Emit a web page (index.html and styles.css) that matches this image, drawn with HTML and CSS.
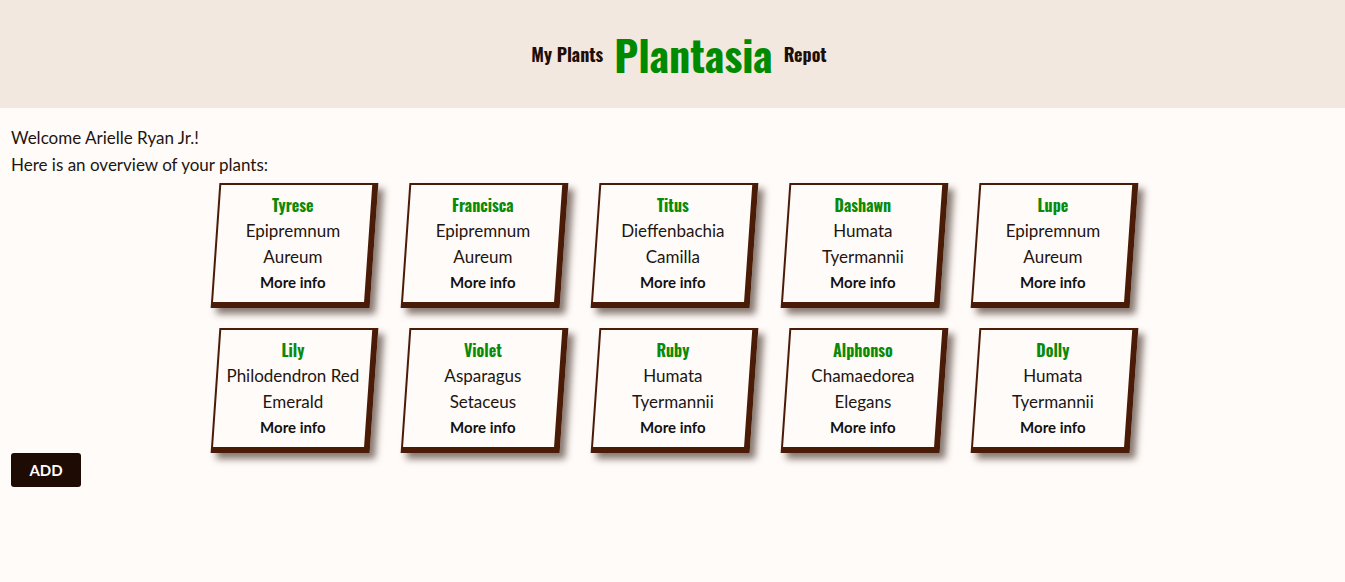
FILE: index.html
```html
<!DOCTYPE html>
<html lang="en">
<head>
<meta charset="utf-8">
<title>Plantasia</title>
<link rel="stylesheet" href="styles.css">
</head>
<body>
<header class="site-header">
  <nav class="nav">
    <a class="nav-link" href="#">My Plants</a>
    <a class="brand" href="#">Plantasia</a>
    <a class="nav-link" href="#">Repot</a>
  </nav>
</header>
<main class="content">
  <p class="intro">Welcome Arielle Ryan Jr.!</p>
  <p class="intro">Here is an overview of your plants:</p>
  <div class="plant-grid">
    <div class="card"><div class="card-inner"><div class="plant-name">Tyrese</div><div class="species">Epipremnum</div><div class="species">Aureum</div><a class="more" href="#">More info</a></div></div>
    <div class="card"><div class="card-inner"><div class="plant-name">Francisca</div><div class="species">Epipremnum</div><div class="species">Aureum</div><a class="more" href="#">More info</a></div></div>
    <div class="card"><div class="card-inner"><div class="plant-name">Titus</div><div class="species">Dieffenbachia</div><div class="species">Camilla</div><a class="more" href="#">More info</a></div></div>
    <div class="card"><div class="card-inner"><div class="plant-name">Dashawn</div><div class="species">Humata</div><div class="species">Tyermannii</div><a class="more" href="#">More info</a></div></div>
    <div class="card"><div class="card-inner"><div class="plant-name">Lupe</div><div class="species">Epipremnum</div><div class="species">Aureum</div><a class="more" href="#">More info</a></div></div>
    <div class="card"><div class="card-inner"><div class="plant-name">Lily</div><div class="species">Philodendron Red</div><div class="species">Emerald</div><a class="more" href="#">More info</a></div></div>
    <div class="card"><div class="card-inner"><div class="plant-name">Violet</div><div class="species">Asparagus</div><div class="species">Setaceus</div><a class="more" href="#">More info</a></div></div>
    <div class="card"><div class="card-inner"><div class="plant-name">Ruby</div><div class="species">Humata</div><div class="species">Tyermannii</div><a class="more" href="#">More info</a></div></div>
    <div class="card"><div class="card-inner"><div class="plant-name">Alphonso</div><div class="species">Chamaedorea</div><div class="species">Elegans</div><a class="more" href="#">More info</a></div></div>
    <div class="card"><div class="card-inner"><div class="plant-name">Dolly</div><div class="species">Humata</div><div class="species">Tyermannii</div><a class="more" href="#">More info</a></div></div>
  </div>
  <button class="add-btn" type="button">ADD</button>
</main>
</body>
</html>
```
FILE: styles.css
```css
html, body {
  margin: 0;
  padding: 0;
}
body {
  background: #fffbf9;
  color: #221510;
  font-family: "Lato", "Noto Sans", sans-serif;
}
.site-header {
  height: 108px;
  background: #f2e8df;
  display: flex;
  align-items: center;
  justify-content: center;
  padding-left: 13px;
}
.nav {
  display: flex;
  align-items: center;
  gap: 11px;
}
.nav-link {
  font-family: "Oswald", "Liberation Sans Narrow", "DejaVu Sans Condensed", sans-serif;
  font-weight: 700;
  font-size: 18px;
  color: #1f0e06;
  text-decoration: none;
  margin-top: -1px;
}
.brand {
  font-family: "Oswald", "Liberation Sans Narrow", "DejaVu Sans Condensed", sans-serif;
  font-weight: 700;
  font-size: 42px;
  color: #008a00;
  text-decoration: none;
  line-height: 1;
}
.content {
  padding: 16px 11px 40px;
}
.intro {
  margin: 0;
  font-size: 17px;
  line-height: 27px;
}
.plant-grid {
  display: grid;
  grid-template-columns: repeat(5, 159px);
  column-gap: 31px;
  row-gap: 20px;
  justify-content: center;
  padding-left: 4px;
  margin-top: 5px;
}
.card {
  box-sizing: border-box;
  height: 125px;
  background: #fffbf9;
  border-style: solid;
  border-color: #4a1c07;
  border-width: 2px 6px 6px 2px;
  transform: skewX(-4deg);
  box-shadow: 6px 6px 7px rgba(70, 50, 40, 0.65);
}
.card-inner {
  transform: skewX(4deg);
  padding-top: 7px;
  text-align: center;
}
.plant-name {
  font-family: "Oswald", "Liberation Sans Narrow", "DejaVu Sans Condensed", sans-serif;
  font-weight: 700;
  font-size: 16px;
  line-height: 26px;
  color: #0a8a0a;
}
.species {
  font-size: 17px;
  line-height: 26px;
  color: #221510;
}
.more {
  display: block;
  font-weight: 700;
  font-size: 15px;
  line-height: 25px;
  color: #111;
  text-decoration: none;
}
.add-btn {
  display: block;
  margin-top: 0;
  width: 70px;
  height: 34px;
  border: none;
  border-radius: 3px;
  background: #1e0b03;
  color: #fff;
  font-family: "Lato", "Noto Sans", sans-serif;
  font-weight: 700;
  font-size: 15px;
}
```
